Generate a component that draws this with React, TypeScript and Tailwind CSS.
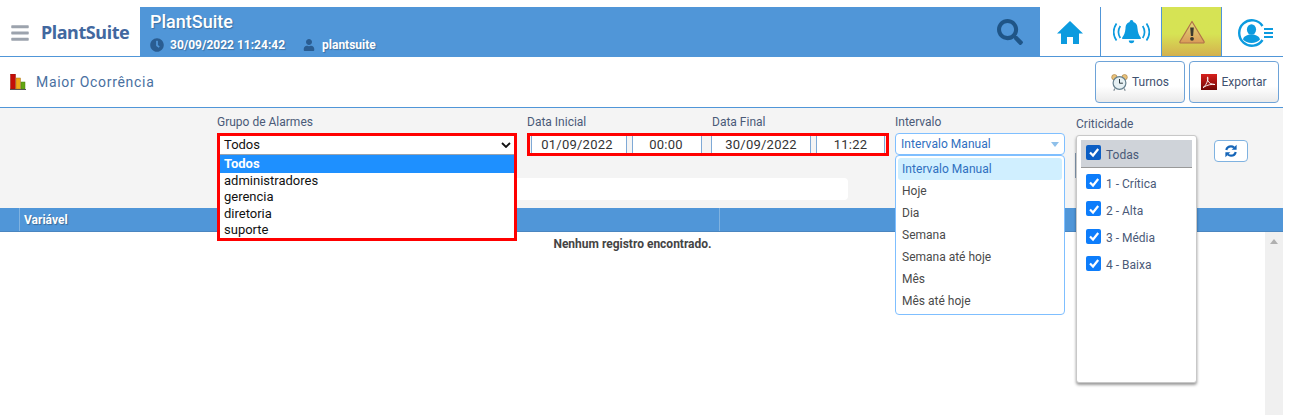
import React from "react";
import { FaBars, FaClock, FaSearch, FaUser } from "react-icons/fa";

const groups = ["administradores", "gerencia", "diretoria", "suporte"];
const ranges = ["Hoje", "Dia", "Semana", "Semana até hoje", "Mês", "Mês até hoje"];
const levels = ["1 - Crítica", "2 - Alta", "3 - Média", "4 - Baixa"];

const Check = ({ dark }: { dark?: boolean }) => (
  <span
    className={`flex h-[15px] w-[15px] shrink-0 items-center justify-center rounded-[2px] ${
      dark ? "mb-[3px] bg-[#0b5ec4]" : "bg-[#0d7dfb]"
    }`}
  >
    <svg viewBox="0 0 12 12" className="h-[12px] w-[12px]">
      <path d="M2 6.500 5 9.500 10.200 3" fill="none" stroke="#fff" strokeWidth="2.200" />
    </svg>
  </span>
);

const BarsIcon = () => (
  <svg viewBox="0 0 16 16" className="h-[16px] w-[16px]">
    <rect x="0.500" y="0" width="5" height="15" fill="#c40d06" stroke="#8e1a10" strokeWidth="0.500" />
    <rect x="6" y="4" width="4.500" height="11" fill="#efa818" stroke="#a8741a" strokeWidth="0.500" />
    <rect x="11" y="8" width="4" height="7" fill="#62a611" stroke="#4c7d12" strokeWidth="0.500" />
    <rect x="0" y="15" width="16" height="1" fill="#555" />
  </svg>
);

const AlarmClock = () => (
  <svg viewBox="0 0 17 17" className="h-[17px] w-[17px]">
    <circle cx="3.400" cy="3.200" r="2.700" fill="#e9c27a" stroke="#a5793a" strokeWidth="0.600" />
    <circle cx="13.600" cy="3.200" r="2.700" fill="#e9c27a" stroke="#a5793a" strokeWidth="0.600" />
    <path d="M3.800 14.500 2.800 16.700M13.200 14.500l1 2.200" stroke="#7d8a92" strokeWidth="1.200" />
    <circle cx="8.500" cy="9" r="6.400" fill="#e6f0f3" stroke="#66808e" strokeWidth="1.200" />
    <path d="M8.500 5v4.200h3.400" fill="none" stroke="#2d3a40" strokeWidth="1" />
  </svg>
);

const PdfIcon = () => (
  <svg viewBox="0 0 16 16" className="h-[16px] w-[16px]">
    <defs>
      <linearGradient id="pdf" x1="0" y1="0" x2="0" y2="1">
        <stop offset="0" stopColor="#d8201c" />
        <stop offset="1" stopColor="#6f0705" />
      </linearGradient>
    </defs>
    <rect width="16" height="16" fill="url(#pdf)" />
    <path
      d="M2 13.500c2-1 3.500-3.500 4.800-7.600.4-1.400-.2-3-.2-3s-.6 2 .2 3.800C8 9 10 10.300 14 10.500c-3-.6-7.500.2-12 3z"
      fill="none"
      stroke="#fff"
      strokeWidth="0.900"
    />
  </svg>
);

const WarningIcon = () => (
  <svg viewBox="0 0 26 24" className="h-[24px] w-[26px]">
    <defs>
      <linearGradient id="warn" x1="0" y1="0" x2="0" y2="1">
        <stop offset="0" stopColor="#e2dc78" />
        <stop offset="1" stopColor="#d99a58" />
      </linearGradient>
    </defs>
    <path
      d="M13 1.500 1 21.500a1 1 0 0 0 1 1.500h22a1 1 0 0 0 1-1.500z"
      fill="url(#warn)"
      stroke="#b0714a"
      strokeWidth="1.200"
      strokeLinejoin="round"
    />
    <path d="M11.200 7.500h3.600l-.7 8.500h-2.200z" fill="#3a3a30" />
    <circle cx="13" cy="18.800" r="1.900" fill="#3a3a30" />
  </svg>
);

const UserMenuIcon = () => (
  <svg viewBox="0 0 36 28" className="h-[28px] w-[36px]">
    <path d="M24.500 7A12.700 12.700 0 1 0 24.500 21" fill="none" stroke="#0c9bdf" strokeWidth="2.400" />
    <ellipse cx="13.500" cy="10.500" rx="4.600" ry="5.200" fill="#0c9bdf" />
    <path d="M5 20.500c.5-3 3.500-4 6-5h5c2.500 1 5.500 2 6 5-2 2-5 3.500-8.500 3.500S7 22.500 5 20.500z" fill="#0c9bdf" />
    <path d="M26 10h9M26 14h9M26 18h9" stroke="#0c9bdf" strokeWidth="2" />
  </svg>
);

const HomeIcon = () => (
  <svg viewBox="0 0 26 23" className="h-[23px] w-[26px]">
    <path d="M13 0 26 12.500h-4V23h-6v-7h-6v7H4V12.500H0z" fill="#0c9bdf" />
  </svg>
);

const BellWaves = () => (
  <svg viewBox="0 0 37 24" className="h-[24px] w-[37px]">
    <path
      d="M18.500 0a1.800 1.800 0 0 1 1.800 2c3.300.9 4 3.500 4.200 6.500.3 4 1.500 7 3.300 9v1.500h-18.600v-1.500c1.800-2 3-5 3.300-9 .2-3 .9-5.600 4.200-6.500a1.800 1.800 0 0 1 1.800-2z"
      fill="#0c9bdf"
    />
    <path d="M15.800 20.500h5.400a2.700 2.700 0 0 1-5.400 0z" fill="#0c9bdf" />
    <path
      d="M3.500 3.500c-3.700 5.500-3.700 11.500 0 17M7.300 6c-2.500 4-2.500 8 0 12M33.500 3.500c3.700 5.500 3.700 11.500 0 17M29.700 6c2.500 4 2.500 8 0 12"
      fill="none"
      stroke="#0c9bdf"
      strokeWidth="1.700"
    />
  </svg>
);

const RefreshIcon = () => (
  <svg viewBox="0 0 14 14" className="h-[14px] w-[14px]">
    <path d="M2.300 6C2.800 3.700 4.700 2.300 7 2.300c1.200 0 2.300.5 3.100 1.200" fill="none" stroke="#1565b8" strokeWidth="2.200" />
    <path d="M12.600 0.800v5h-5z" fill="#1565b8" />
    <path d="M11.700 8c-.5 2.300-2.400 3.700-4.700 3.700-1.200 0-2.300-.5-3.100-1.200" fill="none" stroke="#1565b8" strokeWidth="2.200" />
    <path d="M1.400 13.200v-5h5z" fill="#1565b8" />
  </svg>
);

const DateInput = ({ value, width }: { value: string; width: string }) => (
  <div
    className={`${width} flex h-[17px] items-center justify-center border-x border-[#7fa9d6] bg-white text-[13px] tracking-[0.250px] text-[#333]`}
  >
    {value}
  </div>
);

const ActionButton = ({
  icon,
  label,
  width,
}: {
  icon: React.ReactNode;
  label: string;
  width: string;
}) => (
  <button
    className={`${width} flex h-[42px] items-center justify-center gap-[4px] rounded-[4px] border border-[#6ea3d8] bg-gradient-to-b from-white from-60% to-[#eaeaea] text-[12px] text-[#3f5170]`}
  >
    {icon}
    {label}
  </button>
);

export default function App() {
  return (
    <div className="relative h-[415px] w-[1289px] overflow-hidden bg-white font-['Roboto',sans-serif]">
      <div className="w-[1283px]">
        {/* top bar */}
        <header className="flex h-[57px] border-b border-[#5096d8] pt-[7px]">
          <div className="flex w-[140px] items-center pt-[2px]">
            <FaBars className="ml-[10px] text-[#9ca3ad]" size={20} />
            <span className="ml-[11px] font-['Noto_Sans',sans-serif] text-[18px] font-bold tracking-[-0.400px] text-[#42689f]">
              PlantSuite
            </span>
          </div>
          <div className="flex w-[900px] items-center justify-between bg-[#5096d8] pr-[17px]">
            <div className="pl-[10px] [text-shadow:1px_1px_1px_rgba(0,0,0,0.25)]">
              <div className="text-[18px] leading-[20px] font-medium text-white">PlantSuite</div>
              <div className="mt-[6px] flex items-center text-[12px] leading-[14px] font-bold text-white">
                <FaClock className="mr-[6px] text-[#2a5d92]" size={14} />
                30/09/2022 11:24:42
                <FaUser className="mr-[7px] ml-[18px] text-[#2a5d92]" size={12} />
                plantsuite
              </div>
            </div>
            <FaSearch className="text-[#1f5587]" size={26} />
          </div>
          <div className="flex w-[60px] items-center justify-center pt-[2px]">
            <HomeIcon />
          </div>
          <div className="flex w-[61px] items-center justify-center border-l border-[#5096d8]">
            <BellWaves />
          </div>
          <div className="flex w-[61px] items-center justify-center border-x border-[#5096d8] bg-gradient-to-b from-[#d6e354] from-55% to-[#d3b04e]">
            <WarningIcon />
          </div>
          <div className="flex flex-1 items-center justify-center pt-[2px] pl-[7px]">
            <UserMenuIcon />
          </div>
        </header>

        {/* page title */}
        <div className="flex h-[51px] items-center justify-between border-b border-[#5096d8] pr-[4px] pl-[10px]">
          <div className="flex items-center gap-[10px]">
            <BarsIcon />
            <h1 className="text-[14px] tracking-[0.700px] text-[#49709f]">Maior Ocorrência</h1>
          </div>
          <div className="flex gap-[4px]">
            <ActionButton icon={<AlarmClock />} label="Turnos" width="w-[90px]" />
            <ActionButton icon={<PdfIcon />} label="Exportar" width="w-[90px]" />
          </div>
        </div>

        {/* filters */}
        <div className="relative flex h-[100px] bg-[#f4f4f4] pl-[217px] text-[12px] text-[#4a5a78]">
          <div className="w-[310px] pt-[7px]">
            <label className="block h-[18px] leading-[14px]">Grupo de Alarmes</label>
            <div className="relative">
              <div className="absolute top-0 left-0 z-20 w-[300px] border-[3px] border-[#ff0000] bg-white text-[13px] leading-[16px] text-[#111]">
                <div className="flex h-[19px] items-center justify-between border-b border-[#9ba3ad] pr-[3px] pl-[4px]">
                  Todos
                  <svg viewBox="0 0 10 6" className="h-[6px] w-[10px]">
                    <path d="M1 1l4 4 4-4" fill="none" stroke="#111" strokeWidth="1.800" />
                  </svg>
                </div>
                <div className="h-[18px] bg-[#1e90ff] pl-[4px] leading-[18px] font-bold text-white">Todos</div>
                {groups.map((g) => (
                  <div key={g} className="h-[16.300px] pl-[4px]">
                    {g}
                  </div>
                ))}
              </div>
            </div>
            <div className="mt-[45px] h-[22px] w-[631px] rounded-[4px] bg-white" />
          </div>

          <div className="w-[368px] pt-[7px]">
            <div className="flex h-[18px] leading-[14px]">
              <label className="w-[185px]">Data Inicial</label>
              <label>Data Final</label>
            </div>
            <div className="flex h-[23px] w-[362px] items-center justify-between border-[3px] border-[#ff0000] px-[1px]">
              <div className="flex gap-[5px]">
                <DateInput value="01/09/2022" width="w-[96px] pr-[4px]" />
                <DateInput value="00:00" width="w-[70px] pr-[2px]" />
              </div>
              <div className="flex gap-[5px]">
                <DateInput value="30/09/2022" width="w-[100px]" />
                <DateInput value="11:22" width="w-[69px]" />
              </div>
            </div>
          </div>

          <div className="w-[181px] pt-[7px]">
            <label className="block h-[18px] leading-[14px]">Intervalo</label>
            <div className="relative w-[170px]">
              <div className="flex h-[22px] items-center justify-between rounded-[4px] border border-[#7fbfff] bg-white px-[5px] tracking-[0.050px] text-[#2f6fc0]">
                Intervalo Manual
                <span className="mt-[1px] border-x-[4px] border-t-[5px] border-x-transparent border-t-[#8fc0ea]" />
              </div>
              <div className="absolute top-[22px] left-0 z-20 h-[160px] w-[170px] rounded-[4px] border border-[#7fbfff] bg-white p-[2px] text-[#4a4a4a]">
                <div className="flex h-[22px] items-center rounded-[3px] bg-[#d0efff] pl-[4px] tracking-[0.050px] text-[#2f6fc0]">
                  Intervalo Manual
                </div>
                {ranges.map((r) => (
                  <div key={r} className="flex h-[22px] items-center pl-[4px]">
                    {r}
                  </div>
                ))}
              </div>
            </div>
          </div>

          <div className="w-[138px] pt-[9px]">
            <label className="block h-[12px] leading-[14px]">Criticidade</label>
            <div className="relative">
              <span className="absolute top-[24px] -left-[1px] h-[25px] w-[1px] bg-[#8aa0b8]" />
              <div className="absolute top-[6px] left-0 z-20 h-[248px] w-[121px] rounded-[3px] border border-[#c8c8c8] bg-white p-[4px] shadow-[0_2px_3px_rgba(0,0,0,0.4)]">
                <div className="flex h-[28px] items-center gap-[5px] border-b border-[#999] bg-[#cfd3d9] pl-[5px]">
                  <Check dark />
                  <span className="pt-[3px]">Todas</span>
                </div>
                <div className="mt-[6px] flex flex-col gap-[11.700px] pl-[5px]">
                  {levels.map((l) => (
                    <div key={l} className="flex h-[15.500px] items-center gap-[5px]">
                      <Check />
                      <span className="pt-[4px]">{l}</span>
                    </div>
                  ))}
                </div>
              </div>
            </div>
          </div>

          <div className="pt-[32px]">
            <button className="flex h-[22px] w-[34px] items-center justify-center rounded-[4px] border border-[#7fb2e0] bg-white">
              <RefreshIcon />
            </button>
          </div>
        </div>

        {/* results table */}
        <div className="flex h-[24px] border-b border-[#4a86c0] bg-[#5096d8] text-[12px] leading-[24px] font-bold text-white [text-shadow:1px_1px_1px_rgba(0,0,0,0.3)]">
          <div className="w-[20px] border-r border-[#7fb2e0]" />
          <div className="w-[700px] border-r border-[#7fb2e0] pl-[4px]">Variável</div>
        </div>
        <div className="flex h-[183px]">
          <div className="flex-1 pt-[5px] text-center text-[12px] leading-[14px] font-bold text-[#444]">
            Nenhum registro encontrado.
          </div>
          <div className="flex w-[18px] justify-center bg-[#f0f0f0] pt-[7px]">
            <span className="h-0 border-x-[4px] border-b-[5px] border-x-transparent border-b-[#b0b0b0]" />
          </div>
        </div>
      </div>
    </div>
  );
}
